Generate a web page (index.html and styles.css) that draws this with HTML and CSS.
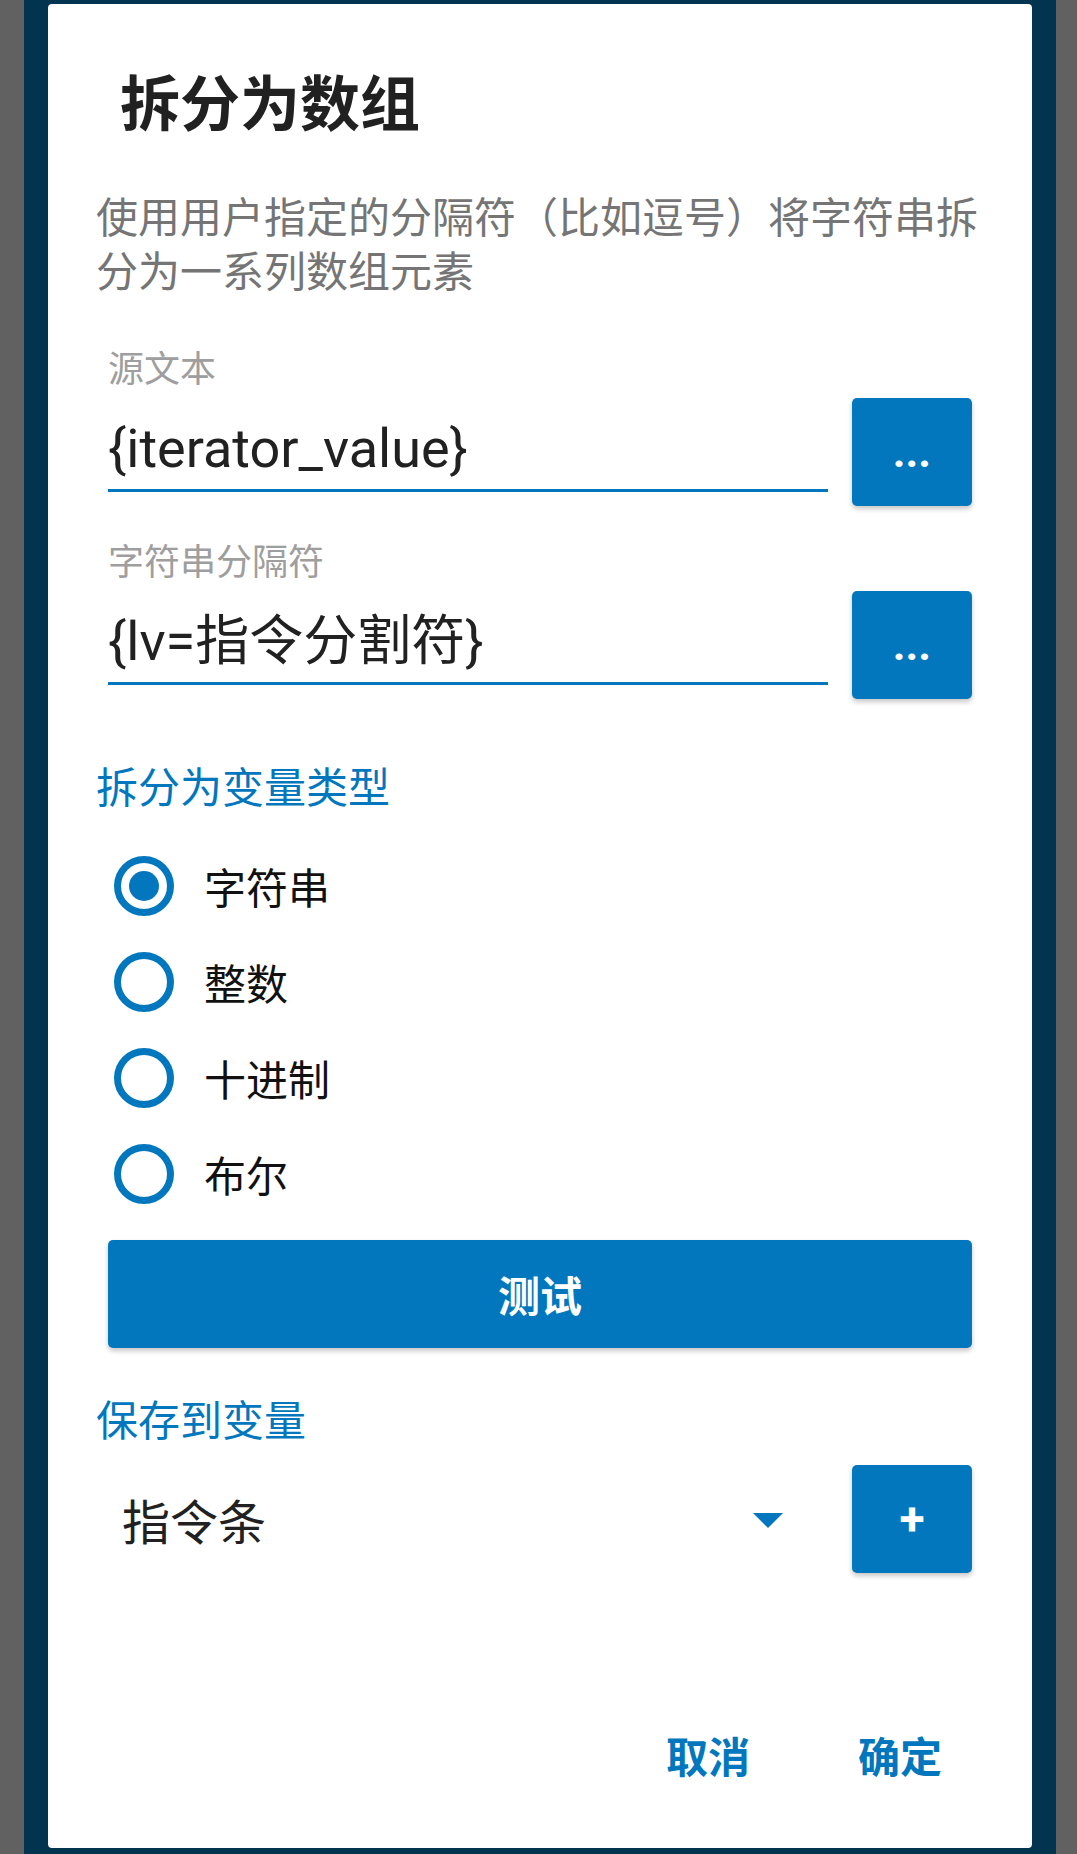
FILE: index.html
```html
<!DOCTYPE html>
<html lang="zh-CN">
<head>
<meta charset="utf-8">
<title>拆分为数组</title>
<link rel="stylesheet" href="styles.css">
</head>
<body>
<div class="scrim">
  <div class="dialog">
    <h1 class="title">拆分为数组</h1>
    <p class="desc">使用用户指定的分隔符（比如逗号）将字符串拆分为一系列数组元素</p>

    <div class="label">源文本</div>
    <div class="row">
      <div class="field">
        <div class="value">{iterator_value}</div>
        <div class="line"></div>
      </div>
      <div class="btn-sq dots">...</div>
    </div>

    <div class="label label-second">字符串分隔符</div>
    <div class="row">
      <div class="field">
        <div class="value">{lv=指令分割符}</div>
        <div class="line"></div>
      </div>
      <div class="btn-sq dots">...</div>
    </div>

    <div class="section">拆分为变量类型</div>
    <div class="radios">
      <div class="radio-row"><span class="radio checked"></span><span class="radio-text">字符串</span></div>
      <div class="radio-row"><span class="radio"></span><span class="radio-text">整数</span></div>
      <div class="radio-row"><span class="radio"></span><span class="radio-text">十进制</span></div>
      <div class="radio-row"><span class="radio"></span><span class="radio-text">布尔</span></div>
    </div>

    <div class="test-btn">测试</div>

    <div class="section section-save">保存到变量</div>
    <div class="row spinner-row">
      <div class="spinner">
        <span class="spinner-text">指令条</span>
        <span class="caret"></span>
      </div>
      <div class="btn-sq plus">+</div>
    </div>

    <div class="footer">
      <span class="action">取消</span>
      <span class="action">确定</span>
    </div>
  </div>
</div>
</body>
</html>
```
FILE: styles.css
```css
html, body {
  margin: 0;
  padding: 0;
}

body {
  width: 1077px;
  height: 1854px;
  overflow: hidden;
  background: #616161;
  font-family: "Noto Sans CJK SC", Roboto, sans-serif;
}

.scrim {
  box-sizing: border-box;
  margin: 0 21px 0 24px;
  height: 1854px;
  padding: 4px 24px 6px 24px;
  background: #02334f;
}

.dialog {
  height: 1844px;
  background: #ffffff;
  border-radius: 4px;
  overflow: hidden;
  display: flex;
  flex-direction: column;
}

.title {
  margin: 56px 0 0 72px;
  font-size: 60px;
  line-height: 80px;
  font-weight: 700;
  color: #212121;
}

.desc {
  margin: 48px 48px 0 48px;
  font-size: 42px;
  line-height: 54px;
  color: #757575;
}

.label {
  margin: 46px 0 0 60px;
  font-size: 36px;
  line-height: 48px;
  color: #9e9e9e;
}

.label-second {
  margin-top: 29px;
}

.row {
  margin: 8px 60px 0 60px;
  height: 108px;
  display: flex;
  align-items: flex-start;
  gap: 24px;
}

.field {
  flex: 1;
  padding-top: 15px;
}

.value {
  font-family: Roboto, "Noto Sans CJK SC", sans-serif;
  font-size: 54px;
  line-height: 72px;
  height: 72px;
  color: #212121;
  white-space: nowrap;
}

.line {
  margin-top: 4px;
  height: 3px;
  background: #0277bd;
}

.btn-sq {
  width: 120px;
  height: 108px;
  flex: none;
  border-radius: 5px;
  background: #0277bd;
  box-shadow: 0 3px 5px rgba(0, 0, 0, 0.22);
  color: #ffffff;
  text-align: center;
  font-family: Roboto, sans-serif;
  font-weight: 700;
  line-height: 108px;
}

.dots {
  font-size: 44px;
}

.plus {
  font-size: 46px;
}

.section {
  margin: 58px 0 0 48px;
  font-size: 42px;
  line-height: 56px;
  color: #0277bd;
}

.radios {
  margin: 25px 0 0 66px;
  display: flex;
  flex-direction: column;
}

.radio-row {
  height: 96px;
  display: flex;
  align-items: center;
  gap: 30px;
}

.radio {
  box-sizing: border-box;
  width: 60px;
  height: 60px;
  border: 7px solid #0277bd;
  border-radius: 50%;
  display: flex;
  align-items: center;
  justify-content: center;
}

.radio.checked::after {
  content: "";
  width: 30px;
  height: 30px;
  border-radius: 50%;
  background: #0277bd;
}

.radio-text {
  font-size: 42px;
  line-height: 56px;
  color: #111111;
}

.test-btn {
  margin: 18px 60px 0 60px;
  height: 108px;
  border-radius: 5px;
  background: #0277bd;
  box-shadow: 0 3px 5px rgba(0, 0, 0, 0.22);
  color: #ffffff;
  text-align: center;
  font-size: 42px;
  line-height: 108px;
  font-weight: 700;
}

.section-save {
  margin-top: 42px;
}

.spinner-row {
  margin-top: 19px;
}

.spinner {
  flex: 1;
  height: 108px;
  display: flex;
  align-items: center;
  padding-left: 14px;
  padding-right: 45px;
}

.spinner-text {
  flex: 1;
  font-size: 48px;
  line-height: 64px;
  color: #212121;
}

.caret {
  width: 0;
  height: 0;
  border-left: 15px solid transparent;
  border-right: 15px solid transparent;
  border-top: 15px solid #0277bd;
  margin-top: 2px;
}

.footer {
  margin-top: 128px;
  height: 108px;
  display: flex;
  justify-content: flex-end;
  gap: 108px;
  padding-right: 90px;
}

.action {
  font-size: 42px;
  line-height: 108px;
  font-weight: 700;
  color: #0277bd;
}
```
